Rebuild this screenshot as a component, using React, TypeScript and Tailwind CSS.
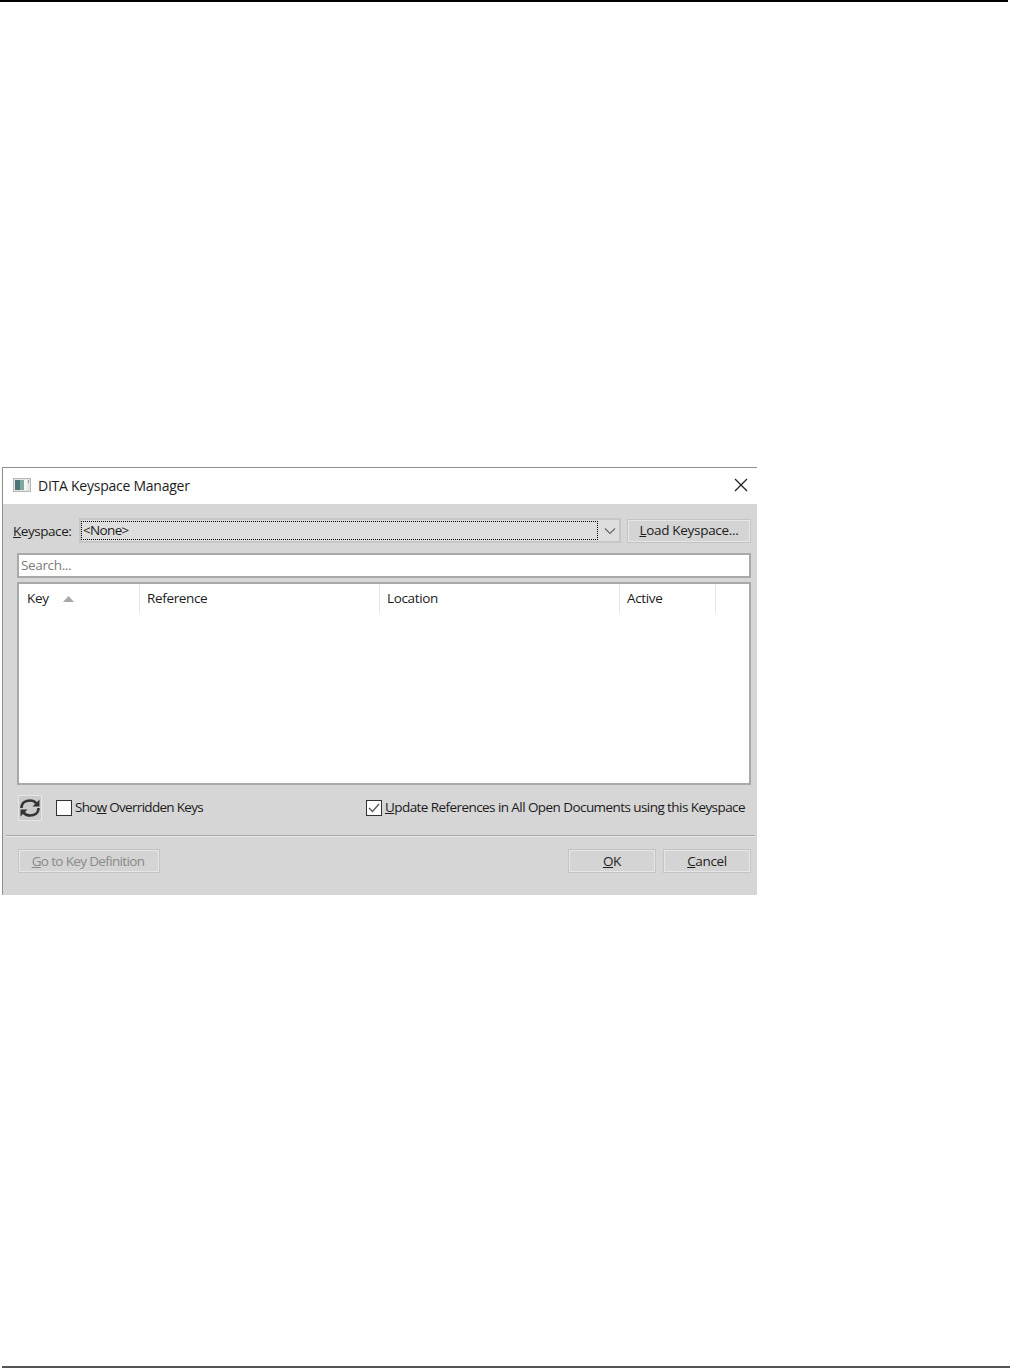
const font = { fontFamily: '"Open Sans", "Noto Sans", sans-serif' };

const DialogIcon = () => (
  <svg width="18" height="16" viewBox="0 0 18 16" className="shrink-0">
    <rect x="0.5" y="1.5" width="17" height="13" fill="#e4e6e6" stroke="#b4b8b8" />
    <rect x="2" y="3" width="5" height="10" fill="#4a7478" />
    <rect x="7" y="3" width="4" height="10" fill="#7daa98" />
    <rect x="11" y="3" width="3" height="10" fill="#f4f6f6" />
    <rect x="15" y="3" width="1" height="3" fill="#8aa0a8" />
  </svg>
);

const RefreshIcon = () => (
  <svg width="22" height="20" viewBox="0 0 22 20" fill="none">
    <path d="M2.5 10 C2.5 5 6.5 2.5 11 2.5 C14 2.5 16 3.6 17.4 5.4" stroke="#333" strokeWidth="2.6" />
    <path d="M20.5 1.5 L20.5 8.5 L13.5 8.5 Z" fill="#333" />
    <path d="M19.5 10 C19.5 15 15.5 17.5 11 17.5 C8 17.5 6 16.4 4.6 14.6" stroke="#333" strokeWidth="2.6" />
    <path d="M1.5 18.5 L1.5 11.5 L8.5 11.5 Z" fill="#333" />
  </svg>
);

const Button = ({ className, children }: { className: string; children: React.ReactNode }) => (
  <div className={`flex h-6 items-center justify-center border-2 border-[#e6e6e6] bg-[#d4d4d4] outline outline-1 -outline-offset-1 outline-[#c4c4c4] text-[13.5px] ${className}`}>
    {children}
  </div>
);

const columns = [
  { label: "Key", width: "w-[121px] pl-[8px]" },
  { label: "Reference", width: "w-[240px] pl-[7px]" },
  { label: "Location", width: "w-[240px] pl-[7px]" },
  { label: "Active", width: "w-[96px] pl-[7px]" },
];

export default function App() {
  return (
    <div className="flex h-[1368px] w-[1010px] flex-col overflow-hidden bg-white text-[#1c1c1c]" style={font}>
      <div className="mr-[2px] h-[2px] shrink-0 bg-black" />

      {/* Dialog */}
      <div className="ml-[2px] mt-[465px] flex h-[428px] w-[755px] shrink-0 flex-col border-l border-t border-[#8f8f8f] bg-[#d6d6d6]">
        <div className="flex h-[36px] shrink-0 items-center justify-between bg-white pb-[2px] pl-[10px] pr-[9px]">
          <div className="flex items-center gap-[7px] text-[14px] tracking-[-0.25px]">
            <DialogIcon />
            <span>DITA Keyspace Manager</span>
          </div>
          <svg width="14" height="14" viewBox="0 0 14 14" stroke="#222" strokeWidth="1.3">
            <path d="M1 1 L13 13 M13 1 L1 13" />
          </svg>
        </div>

        <div className="flex flex-1 flex-col pl-[14px] pr-[5px]">
          <div className="mt-[14px] flex h-[25px] items-center">
            <div className="-ml-[4px] w-[66px] pt-[1px] text-[13.5px] tracking-[-0.45px]">
              <span className="underline">K</span>eyspace:
            </div>
            <div className="flex h-[25px] w-[542px] items-center border-2 border-[#c6c6c6] bg-[#dedede]">
              <div className="flex h-[19px] w-[517px] items-center border border-dotted border-black pl-[1px] text-[13.5px] leading-none tracking-[-0.65px]">
                &lt;None&gt;
              </div>
              <svg width="12" height="8" viewBox="0 0 12 8" fill="none" stroke="#666" strokeWidth="1.2" className="ml-[6px]">
                <path d="M1 1.5 L6 6.5 L11 1.5" />
              </svg>
            </div>
            <Button className="ml-[6px] w-[124px] tracking-[-0.3px]">
              <span>
                <span className="underline">L</span>oad Keyspace...
              </span>
            </Button>
          </div>

          <div className="mt-[10px] flex h-[25px] w-[734px] items-center border-2 border-[#a9a9a9] bg-white pb-[1px] pl-[2px] text-[13.5px] tracking-[-0.35px] text-[#7b7b7b]">
            Search...
          </div>

          {/* Key table */}
          <div className="mt-[4px] h-[203px] w-[734px] border-2 border-[#a9a9a9] bg-white">
            <div className="flex h-[29px] items-center text-[13.5px] tracking-[-0.35px]">
              {columns.map((col, i) => (
                <div key={col.label} className={`flex h-full items-center border-r border-[#e4e4e4] ${col.width}`}>
                  <span>{col.label}</span>
                  {i === 0 && (
                    <svg width="11" height="6" viewBox="0 0 11 6" className="ml-[14px]">
                      <path d="M5.5 0 L11 6 L0 6 Z" fill="#a9a9a9" />
                    </svg>
                  )}
                </div>
              ))}
            </div>
          </div>

          <div className="mt-[9px] flex h-[28px] items-center text-[13.5px]">
            <div className="ml-[1px] flex h-[26px] w-[24px] items-center justify-center border border-[#e6e6e6] bg-[#cbcbcb]">
              <RefreshIcon />
            </div>
            <div className="ml-[14px] h-4 w-4 border border-[#333] bg-white" />
            <span className="ml-[3px] pb-[1px] tracking-[-0.7px]">
              Sho<span className="underline">w</span> Overridden Keys
            </span>
            <div className="ml-auto mr-[7px] flex items-center">
              <div className="flex h-4 w-4 items-center justify-center border border-[#333] bg-white">
                <svg width="12" height="10" viewBox="0 0 12 10" fill="none" stroke="#555" strokeWidth="1.3">
                  <path d="M1 5 L4.5 8.5 L11 1" />
                </svg>
              </div>
              <span className="ml-[3px] pb-[1px] tracking-[-0.57px]">
                <span className="underline">U</span>pdate References in All Open Documents using this Keyspace
              </span>
            </div>
          </div>

          <div className="-ml-[11px] mt-[13px] h-[2px] w-[749px] border-t border-[#a8a8a8] bg-[#ececec]" />

          <div className="mt-[12px] flex items-center">
            <Button className="ml-[1px] w-[142px] tracking-[-0.65px] text-[#8a8a8a]">
              <span className="-ml-[2px]">
                <span className="underline">G</span>o to Key Definition
              </span>
            </Button>
            <Button className="ml-auto w-[88px] tracking-[-0.35px]">
              <span>
                <span className="underline">O</span>K
              </span>
            </Button>
            <Button className="ml-[7px] mr-[1px] w-[88px] tracking-[-0.35px]">
              <span>
                <span className="underline">C</span>ancel
              </span>
            </Button>
          </div>
        </div>
      </div>

      <div className="ml-[2px] mt-auto h-[2px] shrink-0 bg-[#555]" />
    </div>
  );
}
